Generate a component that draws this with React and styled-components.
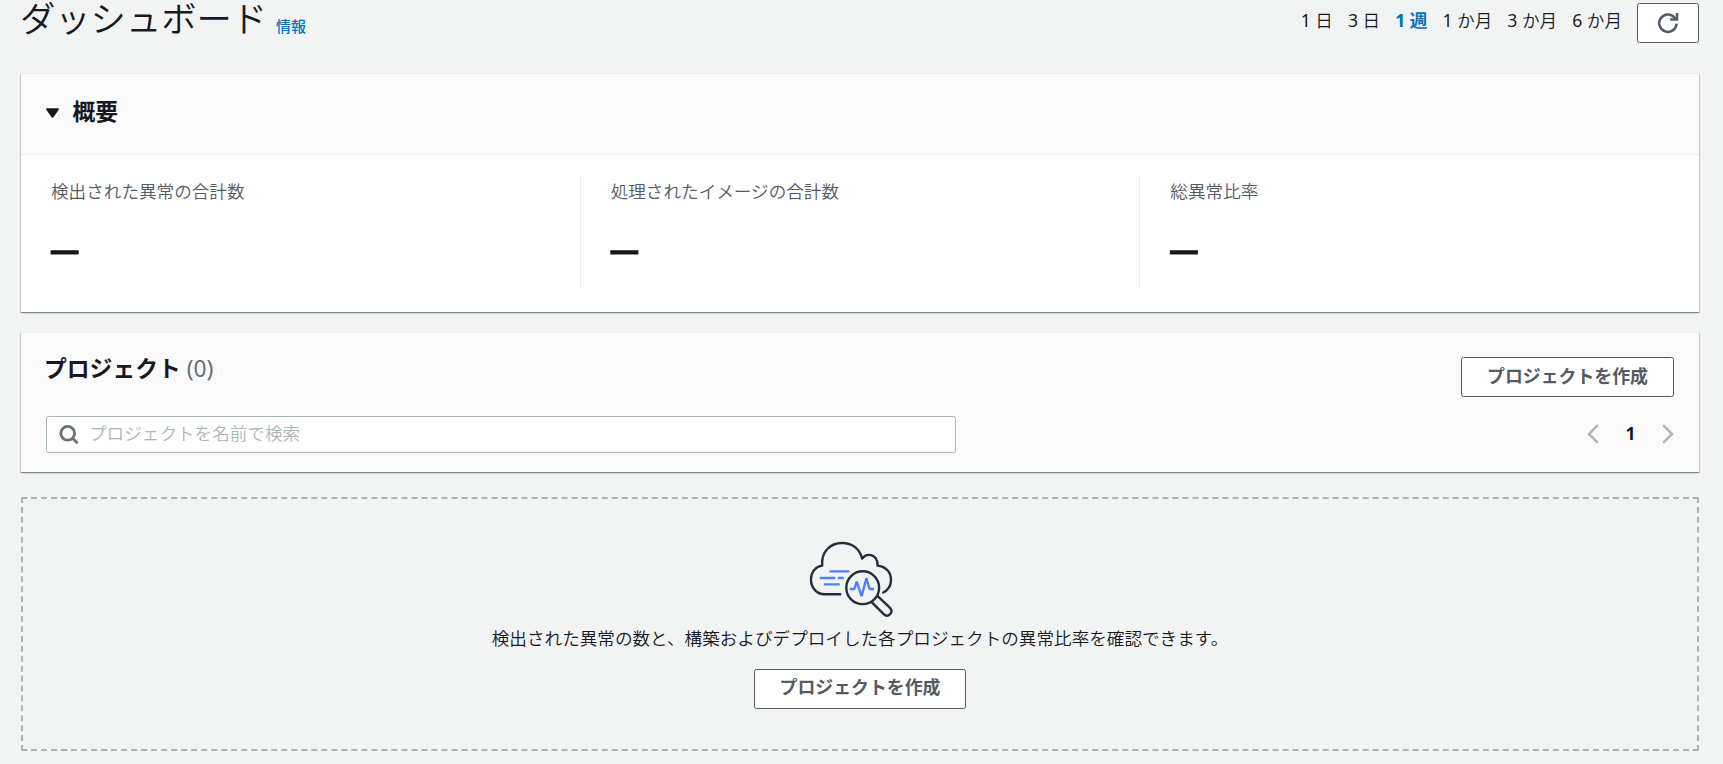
import React from "react";
import styled, { createGlobalStyle } from "styled-components";

const ranges = [
  { count: 1, unit: "日" },
  { count: 3, unit: "日" },
  { count: 1, unit: "週", active: true },
  { count: 1, unit: "か月" },
  { count: 3, unit: "か月" },
  { count: 6, unit: "か月" },
];
const metrics = [
  "検出された異常の合計数",
  "処理されたイメージの合計数",
  "総異常比率",
];

const App = () => {
  return (
    <Page>
      <GlobalStyle />
      <TopBar>
        <Title>ダッシュボード</Title>
        <InfoLink href="#">情報</InfoLink>
        <RangeList>
          {ranges.map(({ count, unit, active }) => (
            <Range key={count + unit} $active={active}>
              <RangeCount $active={active}>{count}</RangeCount> {unit}
            </Range>
          ))}
        </RangeList>
        <RefreshButton aria-label="更新">
          <RefreshIcon />
        </RefreshButton>
      </TopBar>

      <Card>
        <SummaryHeader>
          <Caret viewBox="0 0 13 10">
            <path d="M0.3 0.3h12.4v1.4L7.1 9.8H5.9L0.3 1.7z" fill="#16191f" />
          </Caret>
          <H2>概要</H2>
        </SummaryHeader>
        <Metrics>
          {metrics.map((label) => (
            <Metric key={label}>
              <MetricLabel>{label}</MetricLabel>
              <MetricValue>–</MetricValue>
            </Metric>
          ))}
        </Metrics>
      </Card>

      <ProjectsCard>
        <ProjectsTop>
          <ProjectsHeading>
            プロジェクト <Count>(0)</Count>
          </ProjectsHeading>
          <Button>プロジェクトを作成</Button>
        </ProjectsTop>
        <ProjectsTools>
          <SearchBox>
            <SearchIcon />
            <SearchInput placeholder="プロジェクトを名前で検索" />
          </SearchBox>
          <Pagination>
            <Chevron viewBox="0 0 12 20">
              <path d="M10.8 1.2L2 10l8.8 8.8" />
            </Chevron>
            <PageNumber>1</PageNumber>
            <Chevron viewBox="0 0 12 20">
              <path d="M1.2 1.2L10 10l-8.8 8.8" />
            </Chevron>
          </Pagination>
        </ProjectsTools>
      </ProjectsCard>

      <EmptyState>
        <CloudIcon />
        <EmptyText>
          検出された異常の数と、構築およびデプロイした各プロジェクトの異常比率を確認できます。
        </EmptyText>
        <EmptyButton>プロジェクトを作成</EmptyButton>
      </EmptyState>
    </Page>
  );
};

const RefreshIcon = () => (
  <svg width="22" height="22" viewBox="0 0 22 22" fill="none" stroke="#545b64">
    <path d="M19.6 11.6A8.7 8.7 0 1 1 17.6 5.6L19.4 7.4" strokeWidth="2.5" />
    <path d="M20 1V7.6H13.2" strokeWidth="2.5" />
  </svg>
);

const SearchIcon = () => (
  <svg width="20" height="20" viewBox="0 0 20 20" fill="none" stroke="#687078">
    <circle cx="8.7" cy="8.3" r="6.9" strokeWidth="2.8" />
    <path d="M13.6 13.2L18.6 18.2" strokeWidth="2.8" />
  </svg>
);

const CloudIcon = () => (
  <Cloud viewBox="0 0 84 78" fill="none" strokeWidth="2.4">
    <g stroke="#232f3e" strokeLinejoin="round">
      <path d="M32.2 54.2H15.5C8 54.2 2 48 2 39.8C2 31.8 6.8 26.5 13.2 25.6C12 11.5 21.5 3 33 3C43 3 50.5 8.5 53.2 18.6C58 12 69 14.5 68.5 25.6C77 26.5 82 32.5 82 39.8C82 46 78.5 50.8 73.3 53" />
      <circle cx="53.7" cy="47.7" r="16.4" />
      <path d="M62.9 62.3L74.7 74.2C79 78 84.8 73 81.3 68.2L68.4 55.8" />
    </g>
    <g stroke="#527fff">
      <path d="M20.5 31.4H40.5M10.7 38H26.2M28.8 38H34.8M14.9 44.4H30.8" />
      <path
        d="M40.8 49H45.3L47.7 41.6L52.6 56.2L57.4 38.2L60.6 49H65"
        strokeLinejoin="bevel"
      />
    </g>
  </Cloud>
);

const GlobalStyle = createGlobalStyle`
  * {
    box-sizing: border-box;
  }
  body {
    margin: 0;
    background: #f2f3f3;
    color: #16191f;
    font-family: "Noto Sans", "Noto Sans CJK JP", sans-serif;
    font-size: 17.6px;
    font-weight: 350;
    line-height: 27.5px;
  }
`;
const Page = styled.main`
  height: 764px;
  padding: 0 24px 0 21px;
  overflow: hidden;
`;
const TopBar = styled.header`
  display: flex;
  align-items: flex-start;
  height: 73px;
`;
const Title = styled.h1`
  margin: 0 0 0 -1px;
  font-family: "Liberation Sans", "Noto Sans CJK JP", sans-serif;
  font-size: 35.3px;
  font-weight: 350;
  line-height: 40px;
`;
const InfoLink = styled.a`
  margin: 13px 0 0 9px;
  color: #0073bb;
  font-size: 15px;
  font-weight: 500;
  text-decoration: none;
`;
const RangeList = styled.div`
  display: flex;
  gap: 15px;
  margin: 7px 15px 0 auto;
`;
const Range = styled.span`
  color: ${({ $active }) => ($active ? "#0073bb" : "#16191f")};
  font-weight: ${({ $active }) => ($active ? 700 : 350)};
`;
const RangeCount = styled.span`
  font-weight: ${({ $active }) => ($active ? 700 : 400)};
`;
const RefreshButton = styled.button`
  display: flex;
  align-items: center;
  justify-content: center;
  width: 62px;
  height: 40px;
  margin-top: 3px;
  border: 1px solid #545b64;
  border-radius: 2.5px;
  background: #fff;
`;
const Card = styled.section`
  height: 239px;
  margin-bottom: 20px;
  border-top: 1px solid #eaeded;
  background: #fff;
  box-shadow:
    0 1px 1px 0 rgba(0, 28, 36, 0.3),
    1px 1px 1px 0 rgba(0, 28, 36, 0.15),
    -1px 1px 1px 0 rgba(0, 28, 36, 0.15);
`;
const SummaryHeader = styled.div`
  display: flex;
  align-items: center;
  height: 81px;
  padding: 0 25px 5px;
  border-bottom: 1px solid #eaeded;
  background: #fafafa;
`;
const Caret = styled.svg`
  width: 13px;
  height: 10px;
  margin: 2px 13.5px 0 0;
`;
const H2 = styled.h2`
  margin: 0;
  font-size: 22.8px;
  font-weight: 700;
  line-height: 28px;
`;
const Metrics = styled.div`
  display: flex;
  padding-top: 20px;
`;
const Metric = styled.div`
  flex: 1;
  height: 112px;
  padding: 3px 30px 0;
  border-right: 1px solid #eaeded;
  &:last-child {
    border-right: 0;
  }
`;
const MetricLabel = styled.div`
  color: #545b64;
`;
const MetricValue = styled.div`
  margin-top: 14px;
  font-family: "Liberation Sans", Arial, sans-serif;
  font-size: 49px;
  font-weight: 400;
  line-height: 56px;
  -webkit-text-stroke: 0.8px #16191f;
`;
const ProjectsCard = styled(Card)`
  height: 140px;
  margin-bottom: 25px;
  padding: 24px 25px 0;
  background: #fafafa;
`;
const ProjectsTop = styled.div`
  display: flex;
  align-items: flex-start;
  justify-content: space-between;
  height: 59px;
`;
const ProjectsHeading = styled(H2)`
  margin: -2px 0 0 -2px;
`;
const Count = styled.span`
  color: #687078;
  font-weight: 400;
`;
const Button = styled.button`
  width: 213px;
  height: 40px;
  padding: 0 0 1px;
  border: 1px solid #545b64;
  border-radius: 2.5px;
  background: #fff;
  color: #545b64;
  font: inherit;
  font-size: 17.9px;
  font-weight: 700;
`;
const ProjectsTools = styled.div`
  display: flex;
  align-items: center;
  justify-content: space-between;
`;
const SearchBox = styled.div`
  display: flex;
  align-items: center;
  width: 910px;
  height: 37px;
  padding: 0 13px 0 12px;
  border: 1px solid #aab7b8;
  border-radius: 2.5px;
  background: #fff;
`;
const SearchInput = styled.input`
  flex: 1;
  margin-left: 10px;
  padding: 0 0 2px;
  border: 0;
  outline: 0;
  background: none;
  font: inherit;
  &::placeholder {
    color: #aab7b8;
  }
`;
const Pagination = styled.div`
  display: flex;
  align-items: center;
  padding-bottom: 1px;
`;
const Chevron = styled.svg`
  width: 12px;
  height: 20px;
  fill: none;
  stroke: #aab7b8;
  stroke-width: 2.5;
`;
const PageNumber = styled.span`
  width: 63px;
  font-weight: 700;
  text-align: center;
`;
const EmptyState = styled.section`
  display: flex;
  flex-direction: column;
  align-items: center;
  height: 254px;
  padding-top: 41px;
  border: 2px dashed #aab7b8;
`;
const Cloud = styled.svg`
  width: 84px;
  height: 78px;
  margin-right: 19px;
`;
const EmptyText = styled.p`
  margin: 7px 0 16px;
`;
const EmptyButton = styled(Button)`
  width: 212px;
`;

export default App;
